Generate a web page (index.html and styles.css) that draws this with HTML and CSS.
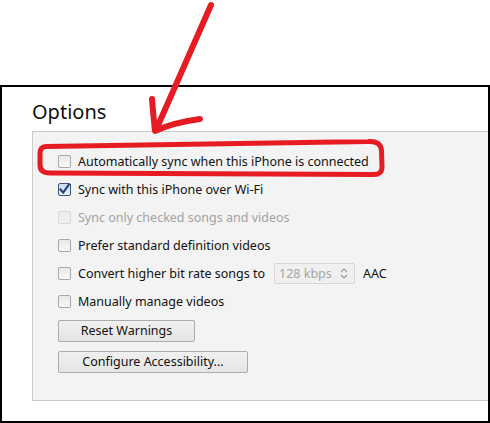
FILE: index.html
```html
<!DOCTYPE html>
<html>
<head>
<meta charset="utf-8">
<link rel="stylesheet" href="styles.css">
</head>
<body>
<div class="frame">
  <h1 class="title">Options</h1>
  <div class="panel">
    <div class="row"><span class="cb"></span><span class="label">Automatically sync when this iPhone is connected</span></div>
    <div class="row"><span class="cb cb-checked"><svg viewBox="0 0 13 13" width="13" height="13"><path d="M2.5 6.5 L5.2 9.6 L10.8 1.8" fill="none" stroke="#27456f" stroke-width="2.2" stroke-linecap="square"/></svg></span><span class="label">Sync with this iPhone over Wi-Fi</span></div>
    <div class="row row-disabled"><span class="cb cb-disabled"></span><span class="label">Sync only checked songs and videos</span></div>
    <div class="row"><span class="cb"></span><span class="label">Prefer standard definition videos</span></div>
    <div class="row"><span class="cb"></span><span class="label">Convert higher bit rate songs to</span><span class="select"><span class="select-text">128 kbps</span><svg class="chev" viewBox="0 0 8 11" width="8" height="11"><path d="M1 4 L4 1 L7 4 M1 7 L4 10 L7 7" fill="none" stroke="#9a9a9a" stroke-width="1.1"/></svg></span><span class="aac">AAC</span></div>
    <div class="row"><span class="cb"></span><span class="label">Manually manage videos</span></div>
    <div class="buttons">
      <button class="btn btn-reset">Reset Warnings</button>
      <button class="btn btn-access">Configure Accessibility...</button>
    </div>
  </div>
</div>
<svg class="annot" viewBox="0 0 490 423" width="490" height="423">
  <g fill="none" stroke="#e61c22" stroke-linecap="round" stroke-linejoin="round">
    <path stroke-width="6" d="M211 5 C196 40 178 80 156 130"/>
    <path stroke-width="6" d="M152 99 C153 112 154 122 155 131 C170 124 185 121 200 119"/>
    <path stroke-width="5" d="M46 146.5 L368 141.5 Q381 140.5 381.5 151 L382 167 Q382 175 373 174.5 L50 173 Q40 173 40 165 L40 154 Q40 146.5 46 146.5 Z"/>
  </g>
</svg>
</body>
</html>
```

FILE: styles.css
```css
html, body {
  margin: 0;
  padding: 0;
}
body {
  width: 490px;
  height: 423px;
  background: #ffffff;
  font-family: "Noto Sans", "Open Sans", sans-serif;
  color: #000;
  position: relative;
  overflow: hidden;
}
.frame {
  margin-top: 85px;
  height: 338px;
  box-sizing: border-box;
  border: 2px solid #000;
  padding-left: 30px;
  display: flex;
  flex-direction: column;
}
.title {
  margin: 0;
  padding-top: 11px;
  margin-bottom: 6px;
  font-size: 20px;
  font-weight: 400;
  line-height: 27px;
  color: #111;
}
.panel {
  height: 270px;
  box-sizing: border-box;
  border: 1px solid #cbcbcb;
  border-right: none;
  background: #f3f3f3;
  padding: 15px 0 0 25px;
  display: flex;
  flex-direction: column;
}
.row {
  height: 28px;
  display: flex;
  align-items: center;
  font-size: 12.5px;
  white-space: nowrap;
  color: #111;
}
.cb {
  width: 13px;
  height: 13px;
  box-sizing: border-box;
  border: 1px solid #a9a9a9;
  border-radius: 2px;
  background: linear-gradient(#e9e9e9, #f7f7f7);
  margin-right: 7px;
  flex: none;
  display: flex;
}
.cb-checked {
  border-color: #3a5680;
  background: linear-gradient(#cfdcef, #e8eef8);
}
.cb-checked svg {
  margin: -1px;
}
.cb-disabled {
  border-color: #d9d9d9;
  background: #eeeeee;
}
.row-disabled .label {
  color: #a2a2a2;
}
.select {
  margin-left: 9px;
  width: 81px;
  height: 21px;
  box-sizing: border-box;
  border: 1px solid #d6d6d6;
  border-radius: 2px;
  background: #f0f0f0;
  display: flex;
  align-items: center;
  justify-content: space-between;
  padding: 0 6px 0 4px;
  color: #a5a5a5;
}
.aac {
  margin-left: 8px;
}
.buttons {
  margin-top: 5px;
  display: flex;
  flex-direction: column;
  align-items: flex-start;
  gap: 9px;
}
.btn {
  height: 22px;
  box-sizing: border-box;
  border: 1px solid #acacac;
  border-radius: 2px;
  background: linear-gradient(#f0f0f0, #e5e5e5);
  font-family: "Noto Sans", "Open Sans", sans-serif;
  font-size: 12.5px;
  color: #111;
  padding: 0;
  line-height: 18px;
}
.btn-reset {
  width: 137px;
}
.btn-access {
  width: 190px;
}
.annot {
  position: absolute;
  left: 0;
  top: 0;
  pointer-events: none;
}
```
